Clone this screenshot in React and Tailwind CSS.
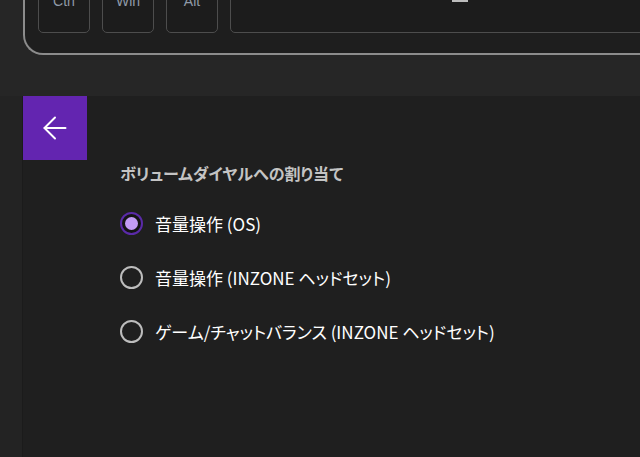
import { ArrowLeft } from "lucide-react";

const jp = "font-['Noto_Sans_CJK_JP','Noto_Sans',sans-serif] [font-feature-settings:'palt']";

const Key = ({ label }) => (
  <div className="w-[52px] h-[58px] shrink-0 rounded-[5px] border border-[#4d4d4d] bg-[#1c1c1c] flex justify-center pt-[18px]">
    <span className="font-['Liberation_Sans',sans-serif] text-[14px] leading-none text-[#8f9aa8]">{label}</span>
  </div>
);

const Radio = ({ checked, label }) => (
  <label className="flex items-center gap-[12px] h-[24px]">
    {checked ? (
      <span className="w-[23px] h-[23px] rounded-full border-[2px] border-[#5a2aa8] bg-[#141414] flex items-center justify-center">
        <span className="w-[13px] h-[13px] rounded-full bg-[#c39cf6]" />
      </span>
    ) : (
      <span className="w-[23px] h-[23px] rounded-full border-[2px] border-[#bdbdbd]" />
    )}
    <span className={`${jp} text-[17px] text-white leading-none`}>{label}</span>
  </label>
);

export default function App() {
  return (
    <div className="w-[640px] h-[457px] overflow-hidden bg-[#262626] flex flex-col">
      <div className="-mt-[40px] ml-[23px] w-[700px] shrink-0 border-l-2 border-b-2 border-[#8c8c8c] rounded-bl-[20px] bg-[#1e1e1e] pl-[13px] pb-[20px] pt-[15px]">
        <div className="flex gap-[12px]">
          <Key label="Ctrl" />
          <Key label="Win" />
          <Key label="Alt" />
          <div className="w-[420px] h-[58px] rounded-[5px] border border-[#4d4d4d] bg-[#1c1c1c]">
            <div className="mt-[23px] ml-[221px] w-[16px] h-[3px] bg-[#bdbdbd]" />
          </div>
        </div>
      </div>
      <div className="mt-[41px] flex flex-1">
        <div className="w-[23px] bg-[#232323] border-r border-[#1b1b1b]" />
        <div className="flex-1 bg-[#1f1f1f]">
          <button className="w-[64px] h-[64px] bg-[#6325b0] flex items-center justify-center">
            <ArrowLeft className="w-[36px] h-[36px] text-white" strokeWidth={1.3} />
          </button>
          <div className="pl-[97px] pt-[5px]">
            <h2 className={`${jp} text-[16px] font-bold text-[#c4c4c4] leading-none`}>ボリュームダイヤルへの割り当て</h2>
            <div className="mt-[30px] flex flex-col gap-[30px]">
              <Radio checked label="音量操作 (OS)" />
              <Radio label="音量操作 (INZONE ヘッドセット)" />
              <Radio label="ゲーム/チャットバランス (INZONE ヘッドセット)" />
            </div>
          </div>
        </div>
      </div>
    </div>
  );
}
